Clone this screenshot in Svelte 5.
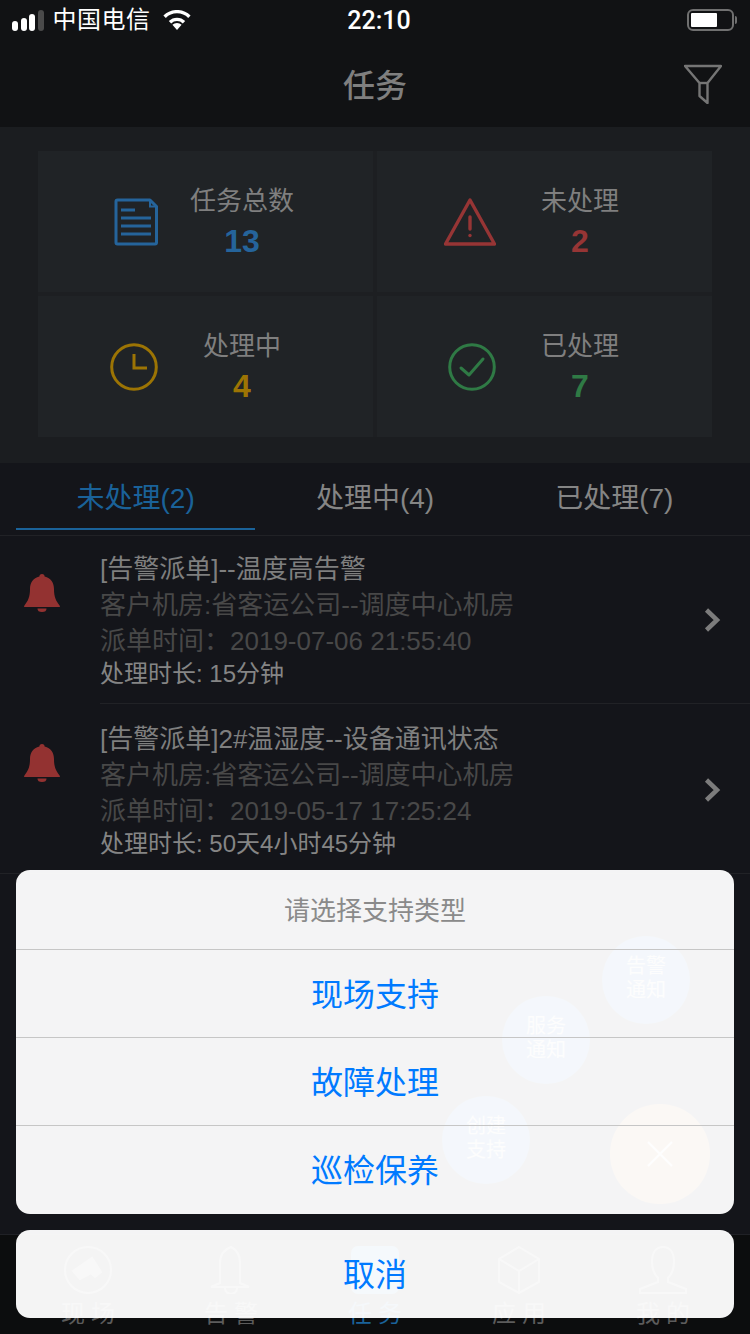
<script>
  const stats = [
    { label: '任务总数', value: 13, tone: 'blue', icon: 'doc' },
    { label: '未处理', value: 2, tone: 'red', icon: 'warn' },
    { label: '处理中', value: 4, tone: 'amber', icon: 'clock' },
    { label: '已处理', value: 7, tone: 'green', icon: 'check' }
  ];
  const tabs = ['未处理(2)', '处理中(4)', '已处理(7)'];
  const rows = [
    { title: '[告警派单]--温度高告警', time: '2019-07-06 21:55:40', dur: '15分钟' },
    { title: '[告警派单]2#温湿度--设备通讯状态', time: '2019-05-17 17:25:24', dur: '50天4小时45分钟' }
  ];
  const nav = [
    { label: '现场', icon: 'cam' },
    { label: '告警', icon: 'bell' },
    { label: '任务', icon: 'task', active: true },
    { label: '应用', icon: 'cube' },
    { label: '我的', icon: 'me' }
  ];
  const options = ['现场支持', '故障处理', '巡检保养'];
</script>

<div class="page">
  <header class="top">
    <div class="status">
      <div class="status-left">
        <div class="signal"><i class="b1"></i><i class="b2"></i><i class="b3"></i><i class="b4"></i></div>
        <span class="carrier">中国电信</span>
        <svg class="wifi" viewBox="0 0 28 20" width="28" height="20">
          <path d="M14 20l-4.600-5.200a6.500 6.500 0 0 1 9.200 0z" fill="#fff"/>
          <path d="M7 12.200a10 10 0 0 1 14 0" fill="none" stroke="#fff" stroke-width="3.400"/>
          <path d="M1.600 6.800a17.500 17.500 0 0 1 24.800 0" fill="none" stroke="#fff" stroke-width="3.400"/>
        </svg>
      </div>
      <span class="clock">22:10</span>
      <div class="battery"><div class="cell"><div class="level"></div></div><div class="cap"></div></div>
    </div>
    <div class="navbar">
      <h1>任务</h1>
      <svg class="filter" viewBox="0 0 38 40" width="38" height="40">
        <path d="M1 2H37L23.5 19V39L15.5 32V19Z" fill="none" stroke="#757575" stroke-width="2.4" stroke-linejoin="round"/>
        <path d="M15.5 19H23.5" stroke="#757575" stroke-width="2.4"/>
      </svg>
    </div>
  </header>

  <section class="panel">
    <div class="grid">
      {#each stats as s}
        <div class="card">
          <div class="card-icon {s.tone}">
            {#if s.icon === 'doc'}
              <svg viewBox="0 0 44 48" width="44" height="48" fill="none" stroke="currentColor" stroke-width="3">
                <path d="M2 3.5A1.5 1.5 0 0 1 3.5 2H36L42.5 8.5V44.5A1.5 1.5 0 0 1 41 46H3.5A1.5 1.5 0 0 1 2 44.5Z" stroke-linejoin="round"/>
                <path d="M36 2V8.5H42.5" stroke-width="2"/>
                <path d="M7 12H21M7 20H37M7 28H37M7 36H37"/>
              </svg>
            {:else if s.icon === 'warn'}
              <svg viewBox="0 0 52 48" width="52" height="48" fill="none" stroke="currentColor" stroke-width="3.4" stroke-linejoin="round">
                <path d="M26 2L50.5 46H1.5Z"/>
                <path d="M26 19V31" stroke-linecap="round"/>
                <circle cx="26" cy="37.5" r="1.7" fill="currentColor" stroke="none"/>
              </svg>
            {:else if s.icon === 'clock'}
              <svg viewBox="0 0 48 48" width="48" height="48" fill="none" stroke="currentColor" stroke-width="3">
                <circle cx="24" cy="24" r="22.3"/>
                <path d="M24 11V25H37"/>
              </svg>
            {:else}
              <svg viewBox="0 0 48 48" width="48" height="48" fill="none" stroke="currentColor" stroke-width="3">
                <circle cx="24" cy="24" r="22.3"/>
                <path d="M13 25L21 32L35 16" stroke-linecap="round" stroke-linejoin="round"/>
              </svg>
            {/if}
          </div>
          <div class="card-text">
            <div class="card-label">{s.label}</div>
            <div class="card-value {s.tone}">{s.value}</div>
          </div>
        </div>
      {/each}
    </div>
  </section>

  <nav class="tabs">
    {#each tabs as t, i}
      <div class="tab" class:on={i === 0}>{t}</div>
    {/each}
  </nav>

  <section class="list">
    {#each rows as r}
      <article class="row">
        <div class="row-icon">
          <svg viewBox="0 0 36 38" width="36" height="38">
            <path d="M18 0a2.6 2.6 0 0 1 2.6 2.6C27 4 30 9 30 15c0 8 2 12 5.6 16.400L36 33H0l.4-1.600C4 27 6 23 6 15 6 9 9 4 15.400 2.600A2.600 2.600 0 0 1 18 0Z" fill="#933231"/>
            <path d="M13.500 34.500h9a4.500 3.500 0 0 1-9 0Z" fill="#933231"/>
          </svg>
        </div>
        <div class="row-main">
          <div class="row-body">
            <div class="row-title">{r.title}</div>
            <div class="row-dim">客户机房:省客运公司--调度中心机房</div>
            <div class="row-dim">派单时间：{r.time}</div>
            <div class="row-dur">处理时长: {r.dur}</div>
          </div>
          <svg class="chev" viewBox="0 0 18 26" width="18" height="26">
            <path d="M3.500 3L14 13L3.500 23" fill="none" stroke="#7c7c7c" stroke-width="4.500"/>
          </svg>
        </div>
      </article>
    {/each}
  </section>

  <footer class="bottom">
    {#each nav as n}
      <div class="nav-item" class:on={n.active}>
        <svg viewBox="0 0 52 48" width="52" height="48" fill="none" stroke={n.active ? '#2a78b5' : '#666'} stroke-width="2">
          {#if n.icon === 'cam'}
            <ellipse cx="26" cy="24" rx="23" ry="23"/>
            <path d="M11 25L30 12L39 26L33 31L29 27L18 33Z" fill="#666"/>
          {:else if n.icon === 'bell'}
            <path d="M26 1c6 3 9 8 9 16v20l9 4H6l9-4V17c0-8 3-13 11-16Z"/>
            <path d="M20 42a6 6 0 0 0 12 0"/>
          {:else if n.icon === 'task'}
            <rect x="2" y="0" width="48" height="48" rx="7" fill="#2a78b5" stroke="none"/>
          {:else if n.icon === 'cube'}
            <path d="M26 1L46 13V36L26 47L6 36V13Z"/>
            <path d="M6 13L26 25L46 13M26 25V47"/>
          {:else}
            <path d="M26 1c8 0 11 7 11 15 0 8-3 13-6 16v4l18 7v4H3v-4l18-7v-4c-3-3-6-8-6-16 0-8 3-15 11-15Z"/>
          {/if}
        </svg>
        <span class="nav-label">{n.label}</span>
      </div>
    {/each}
  </footer>

  <div class="fab f1">告警<br />通知</div>
  <div class="fab f2">服务<br />通知</div>
  <div class="fab f3">创建<br />支持</div>
  <div class="fab close">
    <svg viewBox="0 0 28 28" width="28" height="28"><path d="M2 2L26 26M26 2L2 26" stroke="#ddd" stroke-width="2"/></svg>
  </div>

  <div class="sheet-wrap">
    <div class="sheet">
      <div class="sheet-title">请选择支持类型</div>
      {#each options as o}
        <div class="sheet-option">{o}</div>
      {/each}
    </div>
    <div class="sheet cancel">取消</div>
  </div>
</div>

<style>
  :global(body) { margin: 0; background: #14151a; }
  .page {
    position: relative;
    width: 750px;
    height: 1334px;
    overflow: hidden;
    display: flex;
    flex-direction: column;
    background: #14151a;
    font-family: "Liberation Sans", "Noto Sans CJK SC", sans-serif;
  }
  .top { height: 127px; background: #111214; flex: none; }
  .status { height: 40px; position: relative; display: flex; align-items: center; justify-content: space-between; padding: 0 13px 0 12px; }
  .status-left { display: flex; align-items: center; }
  .signal { display: flex; align-items: flex-end; gap: 2.500px; height: 21px; margin-right: 9px; }
  .signal i { width: 6px; border-radius: 3px; background: #fff; display: block; }
  .b1 { height: 10px; } .b2 { height: 13px; } .b3 { height: 17px; }
  .signal .b4 { height: 21px; background: #4a4a4a; }
  .carrier { color: #fff; font-size: 24px; line-height: 40px; letter-spacing: 0.5px; margin-right: 12px; }
  .clock { position: absolute; left: 8px; right: 0; text-align: center; color: #fff; font: 500 25px/42px Roboto, sans-serif; top: 0; }
  .battery { display: flex; align-items: center; }
  .cell { width: 47px; height: 22px; box-sizing: border-box; border: 2px solid #707070; border-radius: 6px; padding: 2px; }
  .level { width: 26px; height: 100%; background: #fff; border-radius: 1px; }
  .cap { width: 2px; height: 8px; background: #707070; margin-left: 1px; border-radius: 0 2px 2px 0; }
  .navbar { height: 87px; position: relative; display: flex; align-items: center; justify-content: center; }
  .navbar h1 { margin: 0; font-size: 32px; font-weight: 500; color: #7f7f7f; line-height: 90px; padding-top: 4px; }
  .filter { position: absolute; right: 28px; top: 24px; }

  .panel { height: 336px; flex: none; background: #1b1d20; box-sizing: border-box; padding: 24px 38px 26px; }
  .grid { display: grid; grid-template-columns: 335px 335px; grid-template-rows: 141px 141px; gap: 4px; background: #1d1f22; }
  .card { background: #202326; display: grid; grid-template-columns: 120px 168px; align-items: center; }
  .card:nth-child(even) { grid-template-columns: 119px 168px; }
  .card-icon { display: flex; justify-content: flex-end; }
  .card-icon svg { display: block; }
  .card-text { text-align: center; padding-top: 2px; }
  .card-label { font-size: 26px; line-height: 36px; color: #7f7f7f; }
  .card-value { font-size: 32px; font-weight: 700; line-height: 44px; }
  .blue { color: #25649b; }
  .red { color: #963535; }
  .amber { color: #9c7404; }
  .green { color: #2f7a45; }

  .tabs { height: 73px; flex: none; box-sizing: border-box; display: flex; padding: 0 16px; border-bottom: 1px solid #212226; }
  .tab { flex: 1; height: 65px; line-height: 72px; text-align: center; font-size: 28px; color: #858585; }
  .tab.on { color: #1a6299; border-bottom: 2px solid #1a6299; }

  .list { flex: 1; min-height: 0; }
  .row { display: flex; align-items: stretch; }
  .row:last-child { border-bottom: 1px solid #212226; }
  .row-icon { width: 100px; flex: none; padding: 38px 0 0 24px; box-sizing: border-box; }
  .row + .row .row-icon { padding-top: 41px; }
  .row-icon svg { display: block; }
  .row-main { flex: 1; min-width: 0; display: flex; align-items: center; padding: 15px 29px 14px 0; }
  .row + .row .row-main { border-top: 1px solid #212226; padding-top: 17px; }
  .row-body { flex: 1; min-width: 0; white-space: nowrap; }
  .row-title, .row-dim { font-size: 26px; line-height: 36px; }
  .row-title { color: #7f7f7f; }
  .row-dim { color: #484848; }
  .row-dur { font-size: 24px; line-height: 30px; color: #858585; }
  .chev { flex: none; }

  .bottom { height: 100px; flex: none; box-sizing: border-box; background: #0c0d0e; border-top: 1px solid #202126; display: flex; padding-top: 11px; }
  .nav-item { position: absolute; display: flex; flex-direction: column; align-items: center; width: 120px; }
  .nav-item:nth-child(1) { left: 28px; }
  .nav-item:nth-child(2) { left: 171px; }
  .nav-item:nth-child(3) { left: 315px; }
  .nav-item:nth-child(4) { left: 459px; }
  .nav-item:nth-child(5) { left: 603px; }
  .nav-item svg { display: block; }
  .nav-label { font-size: 24px; letter-spacing: 6px; text-indent: 6px; line-height: 40px; color: #5c5c5c; }
  .nav-item.on .nav-label { color: #1a6299; }

  .fab { position: absolute; width: 88px; height: 88px; box-sizing: border-box; padding-bottom: 5px; border-radius: 50%; background: rgb(15, 85, 175); color: #c4c4c4; font-size: 20px; line-height: 24px; text-align: center; display: flex; align-items: center; justify-content: center; }
  .f1 { left: 602px; top: 936px; }
  .f2 { left: 502px; top: 996px; }
  .f3 { left: 442px; top: 1096px; }
  .fab.close { width: 100px; height: 100px; padding: 0; left: 610px; top: 1104px; background: rgb(170, 100, 40); }

  .sheet-wrap { position: absolute; left: 16px; right: 16px; top: 870px; display: flex; flex-direction: column; gap: 16px; }
  .sheet { background: rgba(255, 255, 255, 0.955); border-radius: 14px; overflow: hidden; text-align: center; }
  .sheet-title { height: 79px; line-height: 82px; font-size: 26px; color: #8a8a8a; }
  .sheet-option { height: 87px; line-height: 91px; font-size: 32px; color: #007aff; border-top: 1px solid #c6c6c6; }
  .sheet-option:last-child { height: 88px; }
  .cancel { height: 88px; line-height: 91px; font-size: 32px; color: #007aff; }
</style>
